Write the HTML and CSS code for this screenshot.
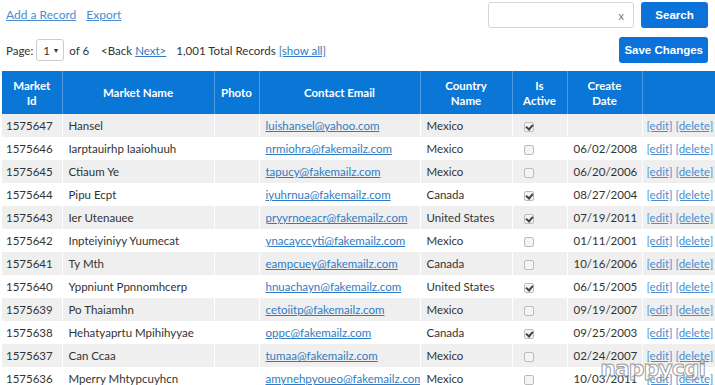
FILE: index.html
```html
<!DOCTYPE html>
<html lang="en">
<head>
    <meta charset="UTF-8">
    <title>Markets</title>
    <link rel="stylesheet" href="styles.css">
</head>
<body>
<div class="page">
    <div class="toolbar">
        <div class="links">
            <a href="#">Add a Record</a>
            <a href="#">Export</a>
        </div>
        <div class="search">
            <div class="search-box"><span class="clear">x</span></div>
            <button class="btn">Search</button>
        </div>
    </div>

    <div class="pager-row">
        <div class="pager">
            <span>Page:</span>
            <span class="page-select">1 <span class="arrow">&#9662;</span></span>
            <span>of 6</span>
            <span class="back">&lt;Back</span>
            <a href="#">Next&gt;</a>
            <span class="total">1,001 Total Records</span>
            <a href="#">[show all]</a>
        </div>
        <button class="btn">Save Changes</button>
    </div>

    <table class="grid">
        <colgroup>
            <col style="width:60px">
            <col style="width:152px">
            <col style="width:45px">
            <col style="width:161px">
            <col style="width:92px">
            <col style="width:55px">
            <col style="width:75px">
            <col style="width:73px">
        </colgroup>
        <thead>
            <tr>
                <th>Market<br>Id</th>
                <th>Market Name</th>
                <th>Photo</th>
                <th>Contact Email</th>
                <th>Country<br>Name</th>
                <th>Is<br>Active</th>
                <th>Create<br>Date</th>
                <th></th>
            </tr>
        </thead>
        <tbody>
            <tr><td>1575647</td><td>Hansel</td><td></td><td><a href="#">luishansel@yahoo.com</a></td><td>Mexico</td><td class="c"><span class="chk on"></span></td><td></td><td class="act"><a href="#">[edit]</a> <a href="#">[delete]</a></td></tr>
            <tr><td>1575646</td><td>Iarptauirhp Iaaiohuuh</td><td></td><td><a href="#">nrmiohra@fakemailz.com</a></td><td>Mexico</td><td class="c"><span class="chk"></span></td><td>06/02/2008</td><td class="act"><a href="#">[edit]</a> <a href="#">[delete]</a></td></tr>
            <tr><td>1575645</td><td>Ctiaum Ye</td><td></td><td><a href="#">tapucy@fakemailz.com</a></td><td>Mexico</td><td class="c"><span class="chk"></span></td><td>06/20/2006</td><td class="act"><a href="#">[edit]</a> <a href="#">[delete]</a></td></tr>
            <tr><td>1575644</td><td>Pipu Ecpt</td><td></td><td><a href="#">iyuhrnua@fakemailz.com</a></td><td>Canada</td><td class="c"><span class="chk on"></span></td><td>08/27/2004</td><td class="act"><a href="#">[edit]</a> <a href="#">[delete]</a></td></tr>
            <tr><td>1575643</td><td>Ier Utenauee</td><td></td><td><a href="#">pryyrnoeacr@fakemailz.com</a></td><td>United States</td><td class="c"><span class="chk on"></span></td><td>07/19/2011</td><td class="act"><a href="#">[edit]</a> <a href="#">[delete]</a></td></tr>
            <tr><td>1575642</td><td>Inpteiyiniyy Yuumecat</td><td></td><td><a href="#">ynacayccyti@fakemailz.com</a></td><td>Mexico</td><td class="c"><span class="chk"></span></td><td>01/11/2001</td><td class="act"><a href="#">[edit]</a> <a href="#">[delete]</a></td></tr>
            <tr><td>1575641</td><td>Ty Mth</td><td></td><td><a href="#">eampcuey@fakemailz.com</a></td><td>Canada</td><td class="c"><span class="chk"></span></td><td>10/16/2006</td><td class="act"><a href="#">[edit]</a> <a href="#">[delete]</a></td></tr>
            <tr><td>1575640</td><td>Yppniunt Ppnnomhcerp</td><td></td><td><a href="#">hnuachayn@fakemailz.com</a></td><td>United States</td><td class="c"><span class="chk on"></span></td><td>06/15/2005</td><td class="act"><a href="#">[edit]</a> <a href="#">[delete]</a></td></tr>
            <tr><td>1575639</td><td>Po Thaiamhn</td><td></td><td><a href="#">cetoiitp@fakemailz.com</a></td><td>Mexico</td><td class="c"><span class="chk"></span></td><td>09/19/2007</td><td class="act"><a href="#">[edit]</a> <a href="#">[delete]</a></td></tr>
            <tr><td>1575638</td><td>Hehatyaprtu Mpihihyyae</td><td></td><td><a href="#">oppc@fakemailz.com</a></td><td>Canada</td><td class="c"><span class="chk on"></span></td><td>09/25/2003</td><td class="act"><a href="#">[edit]</a> <a href="#">[delete]</a></td></tr>
            <tr><td>1575637</td><td>Can Ccaa</td><td></td><td><a href="#">tumaa@fakemailz.com</a></td><td>Mexico</td><td class="c"><span class="chk"></span></td><td>02/24/2007</td><td class="act"><a href="#">[edit]</a> <a href="#">[delete]</a></td></tr>
            <tr><td>1575636</td><td>Mperry Mhtypcuyhcn</td><td></td><td><a href="#">amynehpyoueo@fakemailz.com</a></td><td>Mexico</td><td class="c"><span class="chk"></span></td><td>10/03/2011</td><td class="act"><a href="#">[edit]</a> <a href="#">[delete]</a></td></tr>
        </tbody>
    </table>
</div>
<div class="watermark">nappycgi</div>
</body>
</html>
```

FILE: styles.css
```css
body {
    margin: 0;
    font-family: Lato, 'Open Sans', sans-serif;
    font-size: 11.5px;
    color: #333;
    background: #fff;
    overflow: hidden;
}

a {
    color: #2f7bc4;
    text-decoration: underline;
}

.page {
    padding: 2px 7px 0 2px;
}

.toolbar {
    display: flex;
    justify-content: space-between;
    align-items: flex-start;
    height: 26px;
}

.links {
    padding: 5px 0 0 4px;
    font-size: 12px;
    display: flex;
    gap: 10px;
}

.links a {
    color: #4a8dd0;
}

.search {
    display: flex;
    gap: 7px;
}

.search-box {
    width: 146px;
    height: 26px;
    border: 1px solid #d6d6d6;
    border-radius: 3px;
    display: flex;
    justify-content: flex-end;
    align-items: center;
    padding-right: 9px;
    box-sizing: border-box;
}

.clear {
    color: #777;
    font-size: 11px;
}

.btn {
    background: #0a72d8;
    color: #fff;
    border: none;
    border-radius: 3px;
    font-family: 'Liberation Sans', Arial, sans-serif;
    font-weight: bold;
    font-size: 11.5px;
    height: 26px;
    padding: 0 5px;
    min-width: 67px;
}

.pager-row {
    display: flex;
    justify-content: space-between;
    align-items: center;
    margin-top: 9px;
    height: 26px;
}

.pager {
    display: flex;
    align-items: center;
    padding-left: 4px;
}

.page-select {
    display: inline-flex;
    align-items: center;
    justify-content: space-between;
    width: 15px;
    height: 20px;
    padding: 0 5px 0 6px;
    margin: 0 5px 0 3px;
    border: 1px solid #ccc;
    border-radius: 3px;
}

.arrow {
    font-size: 8px;
}

.back {
    margin: 0 3px 0 12px;
}

.total {
    margin: 0 3px 0 10px;
}

.grid {
    margin-top: 8px;
    border-collapse: collapse;
    table-layout: fixed;
    width: 713px;
}

.grid th {
    background: #0a76d6;
    color: #fff;
    font-weight: bold;
    height: 43px;
    line-height: 15px;
    padding: 0 4px;
    border-left: 1px solid #4c9be2;
    text-align: center;
}

.grid th:first-child {
    border-left: none;
}

.grid td {
    height: 23px;
    padding: 0 6px;
    border-left: 1px solid #fff;
    white-space: nowrap;
    overflow: hidden;
    line-height: 15px;
}

.grid td:first-child {
    padding-left: 4px;
    border-left: none;
}

.grid tbody tr:nth-child(odd) td {
    background: #efefef;
}

.grid td.c {
    padding-left: 11px;
}

.grid td.act {
    padding-left: 4px;
}

.grid td.act a {
    color: #4a8dd0;
}

.chk {
    display: inline-block;
    width: 8px;
    height: 8px;
    border: 1px solid #bdbdbd;
    border-radius: 2px;
    background: #f4f4f4;
    position: relative;
    vertical-align: middle;
}

.chk.on::after {
    content: "";
    position: absolute;
    left: 2px;
    top: 0;
    width: 3px;
    height: 5px;
    border: solid #444;
    border-width: 0 2px 2px 0;
    transform: rotate(40deg);
}

.watermark {
    position: absolute;
    right: 10px;
    bottom: 4px;
    font-family: 'DejaVu Sans', sans-serif;
    font-size: 22px;
    font-weight: bold;
    color: rgba(255, 255, 255, 0.6);
    -webkit-text-stroke: 1px rgba(130, 130, 130, 0.8);
    letter-spacing: -1px;
}
```
